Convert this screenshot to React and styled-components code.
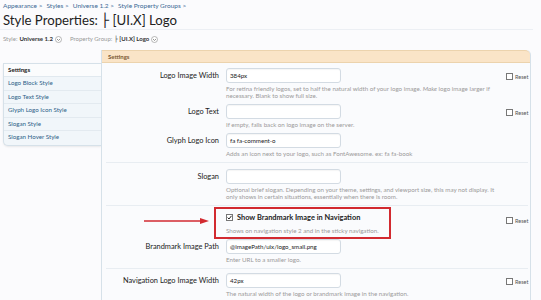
import React from "react";
import styled, { createGlobalStyle } from "styled-components";

const GlobalStyle = createGlobalStyle`
  body {
    margin: 0;
    background: #fbfbfd;
    font-family: Lato, "Open Sans", "DejaVu Sans", sans-serif;
    color: #222;
  }
`;

const Header = styled.div`
  height: 30px;
  box-sizing: border-box;
  padding: 2px 3px 0;
  margin-right: 8px;
  border-bottom: 1px solid #eceff4;
`;

const Crumbs = styled.div`
  font-size: 6.5px;
  line-height: 8px;
  color: #3b6a95;
  & span {
    margin-right: 4px;
  }
`;

const Title = styled.h1`
  margin: 2px 0 0;
  font-size: 13.2px;
  line-height: 17px;
  font-weight: normal;
  color: #222;
`;

const StyleBar = styled.div`
  display: flex;
  align-items: center;
  gap: 8px;
  padding: 5px 3px 0;
  font-size: 6px;
  line-height: 8px;
  color: #999;
`;

const Chooser = styled.div`
  display: flex;
  align-items: center;
  gap: 2px;
  & b {
    color: #333;
  }
`;

const Layout = styled.div`
  display: flex;
  margin-top: 7px;
  margin-right: 10px;
`;

const Sidebar = styled.div`
  width: 97px;
  margin: 13px 0 0 3px;
  align-self: flex-start;
  border: 1px solid #d6e1e9;
  border-right: none;
  border-bottom-left-radius: 5px;
  background: #f1f6fa;
  box-shadow: 0 1px 2px rgba(0, 0, 0, 0.08);
  overflow: hidden;
`;

const SideHead = styled.div`
  height: 12px;
  padding-left: 4px;
  font-size: 6.2px;
  line-height: 12px;
  font-weight: bold;
  color: #222;
  background: #fbfcfd;
  border-bottom: 1px solid #e1e9ef;
`;

const SideItem = styled.div`
  height: 12.5px;
  padding-left: 4px;
  font-size: 6.2px;
  line-height: 12.5px;
  color: #2e5f88;
  border-bottom: 1px solid ${(p) => (p.last ? "transparent" : "#e3eaf0")};
`;

const Panel = styled.div`
  flex: 1;
  min-height: 250px;
  border-left: 1px solid #d6e1e9;
  border-right: 1px solid #d6e1e9;
  border-top-right-radius: 5px;
  background: #fafbfd;
`;

const PanelHead = styled.div`
  height: 11px;
  padding-left: 6px;
  font-size: 6px;
  line-height: 11px;
  font-weight: bold;
  color: #7a5a35;
  background: #fae4c7;
  border-top: 1px solid #ecd3ad;
  border-bottom: 1px solid #ecd3ad;
  border-top-right-radius: 5px;
`;

const Group = styled.div`
  margin: 0 2px 0 4px;
  padding: ${(p) => (p.first ? "0 0 5px" : "1px 0 5px")};
  border-top: ${(p) => (p.first ? "none" : "1px solid #e8edf2")};
`;

const Row = styled.div`
  position: relative;
  display: grid;
  grid-template-columns: 113px 1fr 22px;
  column-gap: 7px;
  padding-top: ${(p) => p.top ?? 5}px;
`;

const Label = styled.div`
  height: 15px;
  font-size: 7.4px;
  line-height: 15px;
  text-align: right;
  color: #222;
  white-space: nowrap;
`;

const Control = styled.div`
  position: relative;
  min-width: 0;
`;

const Input = styled.div`
  width: 110px;
  height: 13px;
  padding-left: 3px;
  border: 1px solid #d3dbe3;
  border-radius: 3px;
  background: #fff;
  box-shadow: inset 0 1px 1px rgba(0, 0, 0, 0.04);
  font-size: 6.2px;
  line-height: 13px;
  color: #222;
`;

const Hint = styled.div`
  margin-top: 2px;
  font-size: 6.2px;
  line-height: 7px;
  color: #9a9a9a;
  white-space: nowrap;
`;

const CheckLine = styled.div`
  display: flex;
  align-items: center;
  gap: 4px;
  height: 15px;
  font-size: 7.4px;
  color: #222;
  font-weight: bold;
`;

const Box = styled.span`
  display: inline-block;
  box-sizing: border-box;
  width: ${(p) => p.size || 7}px;
  height: ${(p) => p.size || 7}px;
  border: 1px solid #777;
  background: #fff;
  flex-shrink: 0;
`;

const Reset = styled.div`
  display: flex;
  align-items: flex-end;
  gap: 2px;
  margin-top: ${(p) => p.top ?? 5}px;
  height: 7px;
  font-size: 5.5px;
  line-height: 6px;
  color: #555;
`;

const RedFrame = styled.div`
  position: absolute;
  left: -12px;
  top: -3px;
  width: 173px;
  height: 28px;
  border: 2px solid #d22a30;
  pointer-events: none;
`;

const Arrow = styled.svg`
  position: absolute;
  left: 38px;
  top: 10px;
`;

const Caret = () => (
  <svg width="7" height="7" viewBox="0 0 7 7">
    <circle cx="3.5" cy="3.5" r="3" fill="#fff" stroke="#999" strokeWidth="0.7" />
    <path d="M2 3 L3.5 4.5 L5 3" fill="none" stroke="#777" strokeWidth="0.8" />
  </svg>
);

const ResetBox = ({ top }) => (
  <Reset top={top}>
    <Box size={7} />
    <span>Reset</span>
  </Reset>
);

const App = () => (
  <>
    <GlobalStyle />
    <Header>
      <Crumbs>
        <span>Appearance &gt;</span>
        <span>Styles &gt;</span>
        <span>Universe 1.2 &gt;</span>
        <span>Style Property Groups &gt;</span>
      </Crumbs>
      <Title>Style Properties: ├ [UI.X] Logo</Title>
    </Header>
    <StyleBar>
      <Chooser>
        Style: <b>Universe 1.2</b>
        <Caret />
      </Chooser>
      <Chooser>
        Property Group: <b>├ [UI.X] Logo</b>
        <Caret />
      </Chooser>
    </StyleBar>
    <Layout>
      <Sidebar>
        <SideHead>Settings</SideHead>
        <SideItem>Logo Block Style</SideItem>
        <SideItem>Logo Text Style</SideItem>
        <SideItem>Glyph Logo Icon Style</SideItem>
        <SideItem>Slogan Style</SideItem>
        <SideItem last>Slogan Hover Style</SideItem>
      </Sidebar>
      <Panel>
        <PanelHead>Settings</PanelHead>
        <Group first>
          <Row>
            <Label>Logo Image Width</Label>
            <Control>
              <Input>384px</Input>
              <Hint>
                For retina friendly logos, set to half the natural width of your logo image. <i>Make</i> logo image larger if
                <br />
                necessary. Blank to show full size.
              </Hint>
            </Control>
            <ResetBox />
          </Row>
          <Row>
            <Label>Logo Text</Label>
            <Control>
              <Input />
              <Hint>If empty, falls back on logo image on the server.</Hint>
            </Control>
            <ResetBox />
          </Row>
          <Row>
            <Label>Glyph Logo Icon</Label>
            <Control>
              <Input>fa fa-comment-o</Input>
              <Hint>Adds an icon next to your logo, such as FontAwesome. ex: fa fa-book</Hint>
            </Control>
          </Row>
        </Group>
        <Group>
          <Row>
            <Label>Slogan</Label>
            <Control>
              <Input />
              <Hint>
                Optional brief slogan. Depending on your theme, settings, and viewport size, this may not display. It
                <br />
                only shows in certain situations, essentially when there is room.
              </Hint>
            </Control>
          </Row>
        </Group>
        <Group>
          <Row top={3}>
            <Arrow width="66" height="8" viewBox="0 0 66 8">
              <line x1="0" y1="4" x2="58" y2="4" stroke="#d22a30" strokeWidth="1.6" />
              <path d="M56 1 L65 4 L56 7 Z" fill="#d22a30" />
            </Arrow>
            <div />
            <Control>
              <RedFrame />
              <CheckLine>
                <Box size={7}>
                  <svg width="5" height="5" viewBox="0 0 5 5" style={{ display: "block" }}>
                    <path d="M0.6 2.6 L2 4 L4.5 0.8" fill="none" stroke="#222" strokeWidth="1" />
                  </svg>
                </Box>
                Show Brandmark Image in Navigation
              </CheckLine>
              <Hint>Shows on navigation style 2 and in the sticky navigation.</Hint>
            </Control>
            <ResetBox top={7} />
          </Row>
          <Row top={5}>
            <Label>Brandmark Image Path</Label>
            <Control>
              <Input>@imagePath/uix/logo_small.png</Input>
              <Hint>Enter URL to a smaller logo.</Hint>
            </Control>
          </Row>
        </Group>
        <Group>
          <Row top={3}>
            <Label>Navigation Logo Image Width</Label>
            <Control>
              <Input>42px</Input>
              <Hint>The natural width of the logo or brandmark image in the navigation.</Hint>
            </Control>
            <ResetBox />
          </Row>
        </Group>
      </Panel>
    </Layout>
  </>
);

export default App;
